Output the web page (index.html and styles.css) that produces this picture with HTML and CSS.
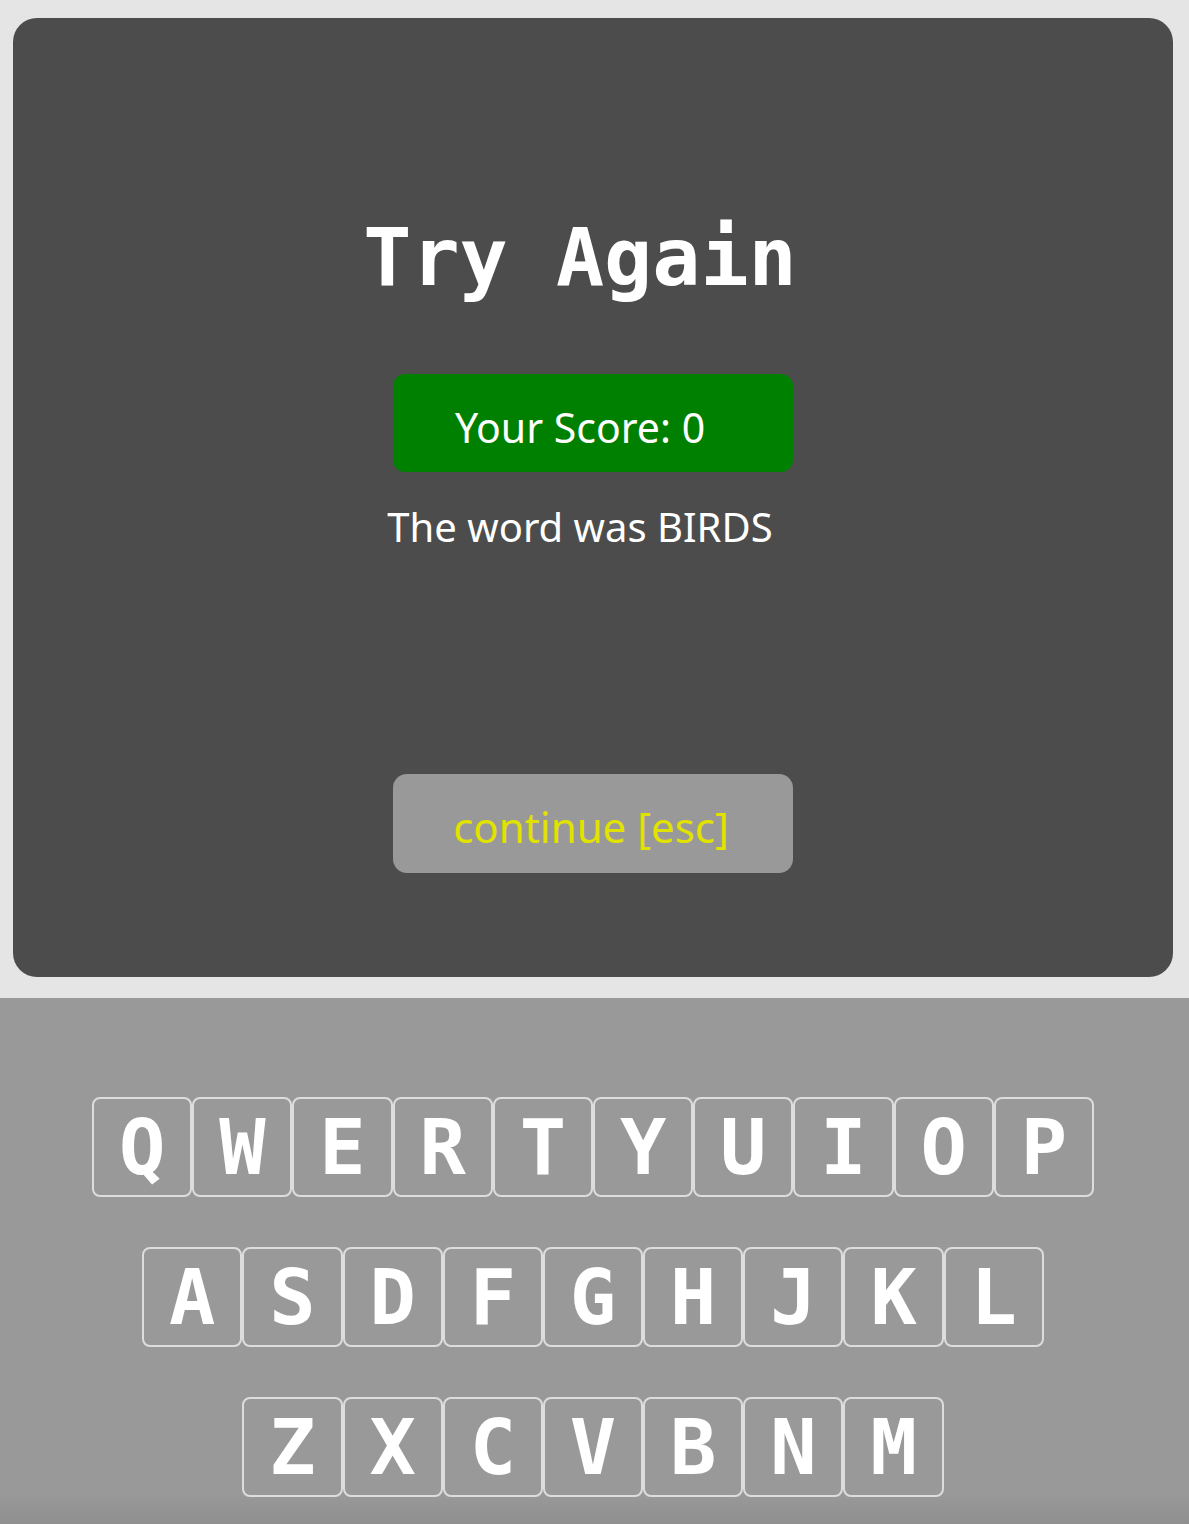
FILE: index.html
```html
<!DOCTYPE html>
<html lang="en">
<head>
<meta charset="utf-8">
<title>Try Again</title>
<link rel="stylesheet" href="styles.css">
</head>
<body>
<div class="page">
  <section class="card">
    <h1 class="title">Try Again</h1>
    <div class="score"><span class="score-text">Your Score: 0</span></div>
    <p class="word">The word was BIRDS</p>
    <button class="continue">continue [esc]</button>
  </section>
  <section class="keyboard">
    <div class="row">
      <div class="key">Q</div><div class="key">W</div><div class="key">E</div><div class="key">R</div><div class="key">T</div><div class="key">Y</div><div class="key">U</div><div class="key">I</div><div class="key">O</div><div class="key">P</div>
    </div>
    <div class="row">
      <div class="key">A</div><div class="key">S</div><div class="key">D</div><div class="key">F</div><div class="key">G</div><div class="key">H</div><div class="key">J</div><div class="key">K</div><div class="key">L</div>
    </div>
    <div class="row">
      <div class="key">Z</div><div class="key">X</div><div class="key">C</div><div class="key">V</div><div class="key">B</div><div class="key">N</div><div class="key">M</div>
    </div>
  </section>
</div>
</body>
</html>
```
FILE: styles.css
```css
html, body {
  margin: 0;
  padding: 0;
  background: #e5e5e5;
}
body {
  width: 1189px;
  height: 1524px;
  overflow: hidden;
  font-family: "Noto Sans", "Open Sans", sans-serif;
}
.page {
  display: flex;
  flex-direction: column;
  height: 1524px;
}
.card {
  margin: 18px 16px 0 13px;
  height: 959px;
  box-sizing: border-box;
  background: #4c4c4c;
  border-radius: 24px;
  display: flex;
  flex-direction: column;
  align-items: center;
  padding-top: 190px;
}
.title {
  margin: 0;
  padding-right: 26px;
  font-family: "DejaVu Sans Mono", monospace;
  font-weight: bold;
  font-size: 80px;
  line-height: 100px;
  color: #ffffff;
}
.score {
  margin-top: 66px;
  width: 400px;
  height: 98px;
  box-sizing: border-box;
  background: #008000;
  border-radius: 12px;
  display: flex;
  align-items: center;
  justify-content: center;
  padding: 7px 26px 0 0;
}
.score-text {
  color: #ffffff;
  font-size: 41px;
}
.word {
  margin: 30px 0 0 0;
  padding-right: 26px;
  color: #ffffff;
  font-size: 40px;
  line-height: 50px;
}
.continue {
  margin-top: 222px;
  width: 400px;
  height: 99px;
  border: none;
  border-radius: 14px;
  background: #999999;
  color: #e2e200;
  font-family: "Noto Sans", "Open Sans", sans-serif;
  font-size: 42px;
  padding: 6px 4px 0 0;
}
.keyboard {
  margin-top: 21px;
  flex: 1;
  background: linear-gradient(to bottom, #999999 0, #999999 calc(100% - 30px), #8f8f8f 100%);
  display: flex;
  flex-direction: column;
  align-items: center;
  padding: 99px 3px 0 0;
  gap: 50px;
}
.row {
  display: flex;
}
.key {
  width: 100.2px;
  height: 100px;
  box-sizing: border-box;
  border: 2px solid #dddddd;
  border-radius: 8px;
  display: flex;
  align-items: center;
  justify-content: center;
  color: #ffffff;
  font-family: "DejaVu Sans Mono", monospace;
  font-weight: bold;
  font-size: 77px;
  line-height: 1;
}
```
